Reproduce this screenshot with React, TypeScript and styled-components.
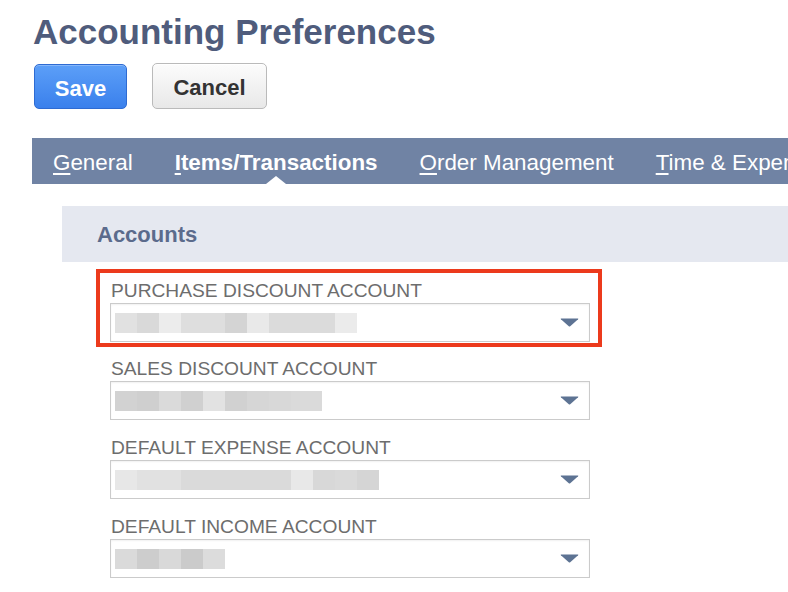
import React from "react";
import styled, { createGlobalStyle } from "styled-components";

const GlobalStyle = createGlobalStyle`
  html, body {
    margin: 0;
    padding: 0;
    background: #ffffff;
    overflow: hidden;
  }
  body {
    font-family: "Liberation Sans", Arial, Helvetica, sans-serif;
  }
`;

const Page = styled.div`
  width: 788px;
  height: 592px;
  padding: 12px 0 0 32px;
  box-sizing: border-box;
  overflow: hidden;
`;

const Title = styled.h1`
  margin: 0 0 0 1px;
  font-size: 35px;
  line-height: 40px;
  font-weight: 700;
  color: #4f5c7c;
`;

const ButtonRow = styled.div`
  display: flex;
  align-items: flex-end;
  gap: 25px;
  margin: 11px 0 0 2px;
`;

const Button = styled.button<{ $primary?: boolean }>`
  font-family: "Liberation Sans", Arial, sans-serif;
  font-size: 22px;
  font-weight: 700;
  border-radius: 5px;
  padding: 4px 0 0;
  cursor: pointer;
  width: ${(p) => (p.$primary ? "93px" : "115px")};
  height: ${(p) => (p.$primary ? "45px" : "46px")};
  color: ${(p) => (p.$primary ? "#ffffff" : "#333333")};
  border: 1px solid ${(p) => (p.$primary ? "#2e6bd2" : "#bababa")};
  background: ${(p) =>
    p.$primary
      ? "linear-gradient(#5c9ff8, #3a80ec)"
      : "linear-gradient(#fcfcfc, #e8e8e8)"};
  box-shadow: ${(p) =>
    p.$primary ? "inset 0 1px 0 rgba(255,255,255,0.25)" : "inset 0 1px 0 #ffffff"};
`;

const TabBar = styled.nav`
  display: flex;
  align-items: center;
  height: 46px;
  margin-top: 29px;
  background: #7083a4;
  white-space: nowrap;
  overflow: hidden;
`;

const Tab = styled.span<{ $active?: boolean }>`
  position: relative;
  display: flex;
  align-items: center;
  height: 100%;
  box-sizing: border-box;
  padding: 3px 21px 0;
  font-size: 22.4px;
  font-weight: ${(p) => (p.$active ? 700 : 400)};
  color: #ffffff;

  u {
    text-decoration-thickness: 1.5px;
    text-underline-offset: 3px;
  }

  &::after {
    content: "";
    display: ${(p) => (p.$active ? "block" : "none")};
    position: absolute;
    left: 50%;
    bottom: 0;
    margin-left: -10px;
    border-left: 10px solid transparent;
    border-right: 10px solid transparent;
    border-bottom: 8px solid #ffffff;
  }
`;

const SectionHeader = styled.div`
  display: flex;
  align-items: center;
  height: 56px;
  box-sizing: border-box;
  padding: 2px 0 0 35px;
  margin: 22px 0 0 30px;
  background: #e5e8f0;
  font-size: 22px;
  font-weight: 700;
  color: #5b6b8c;
`;

const FieldList = styled.div`
  display: flex;
  flex-direction: column;
  margin: 7px 0 0 64px;
  width: 506px;
`;

const FieldBox = styled.div<{ $highlighted?: boolean }>`
  display: flex;
  flex-direction: column;
  box-sizing: border-box;
  border: 4px solid ${(p) => (p.$highlighted ? "#ec3a1c" : "transparent")};
  border-top-width: ${(p) => (p.$highlighted ? "4px" : "0")};
  border-bottom-width: ${(p) => (p.$highlighted ? "4px" : "0")};
  padding: ${(p) => (p.$highlighted ? "8px 8px 1px 10px" : "0 8px 0 10px")};
  margin-bottom: ${(p) => (p.$highlighted ? "12px" : "18px")};
`;

const Label = styled.label`
  display: block;
  margin: 0 0 2px 1px;
  font-size: 19.2px;
  line-height: 20px;
  color: #6d6d6d;
  text-transform: uppercase;
`;

const Select = styled.div`
  display: flex;
  align-items: center;
  justify-content: space-between;
  height: 39px;
  box-sizing: border-box;
  padding: 0 10px 0 4px;
  border: 1px solid #cbcbcb;
  box-shadow: inset 0 1px 2px rgba(0, 0, 0, 0.06);
  background: #ffffff;
`;

const Mosaic = styled.div`
  display: flex;
  height: 20px;
`;

const Tile = styled.span`
  display: block;
  height: 100%;
`;

const Caret = styled.svg`
  width: 19px;
  height: 9px;
  flex: none;
`;

type Block = [number, string];

interface Field {
  label: string;
  value: Block[];
  highlighted?: boolean;
}

const fields: Field[] = [
  {
    label: "Purchase Discount Account",
    highlighted: true,
    value: [
      [22, "#e1e1e1"],
      [22, "#d9d9d9"],
      [22, "#ececec"],
      [44, "#dedede"],
      [22, "#d4d4d4"],
      [22, "#e9e9e9"],
      [66, "#dbdbdb"],
      [22, "#ebebeb"],
    ],
  },
  {
    label: "Sales Discount Account",
    value: [
      [22, "#d2d2d2"],
      [22, "#cfcfcf"],
      [22, "#dadada"],
      [22, "#d0d0d0"],
      [22, "#e2e2e2"],
      [22, "#d1d1d1"],
      [22, "#d6d6d6"],
      [22, "#d8d8d8"],
      [22, "#dadada"],
      [9, "#dadada"],
    ],
  },
  {
    label: "Default Expense Account",
    value: [
      [22, "#e7e7e7"],
      [44, "#e1e1e1"],
      [110, "#dadada"],
      [22, "#e8e8e8"],
      [22, "#d8d8d8"],
      [22, "#dadada"],
      [22, "#d5d5d5"],
    ],
  },
  {
    label: "Default Income Account",
    value: [
      [22, "#dadada"],
      [22, "#cdcdcd"],
      [22, "#d9d9d9"],
      [22, "#cbcbcb"],
      [22, "#dcdcdc"],
    ],
  },
];

const tabs = [
  { key: "G", rest: "eneral" },
  { key: "I", rest: "tems/Transactions", active: true },
  { key: "O", rest: "rder Management" },
  { key: "T", rest: "ime & Expenses" },
];

export default function App() {
  return (
    <>
      <GlobalStyle />
      <Page>
        <Title>Accounting Preferences</Title>
        <ButtonRow>
          <Button $primary>Save</Button>
          <Button>Cancel</Button>
        </ButtonRow>
        <TabBar>
          {tabs.map((t) => (
            <Tab key={t.key} $active={t.active}>
              <span>
                <u>{t.key}</u>
                {t.rest}
              </span>
            </Tab>
          ))}
        </TabBar>
        <SectionHeader>Accounts</SectionHeader>
        <FieldList>
          {fields.map((f) => (
            <FieldBox key={f.label} $highlighted={f.highlighted}>
              <Label>{f.label}</Label>
              <Select>
                <Mosaic>
                  {f.value.map(([w, c], i) => (
                    <Tile key={i} style={{ width: w, background: c }} />
                  ))}
                </Mosaic>
                <Caret viewBox="0 0 19 9">
                  <path
                    d="M1.2 0.5 H17.8 Q18.8 0.5 18.1 1.3 L10.2 8.3 Q9.5 8.9 8.8 8.3 L0.9 1.3 Q0.2 0.5 1.2 0.5 Z"
                    fill="#5d7393"
                  />
                </Caret>
              </Select>
            </FieldBox>
          ))}
        </FieldList>
      </Page>
    </>
  );
}
